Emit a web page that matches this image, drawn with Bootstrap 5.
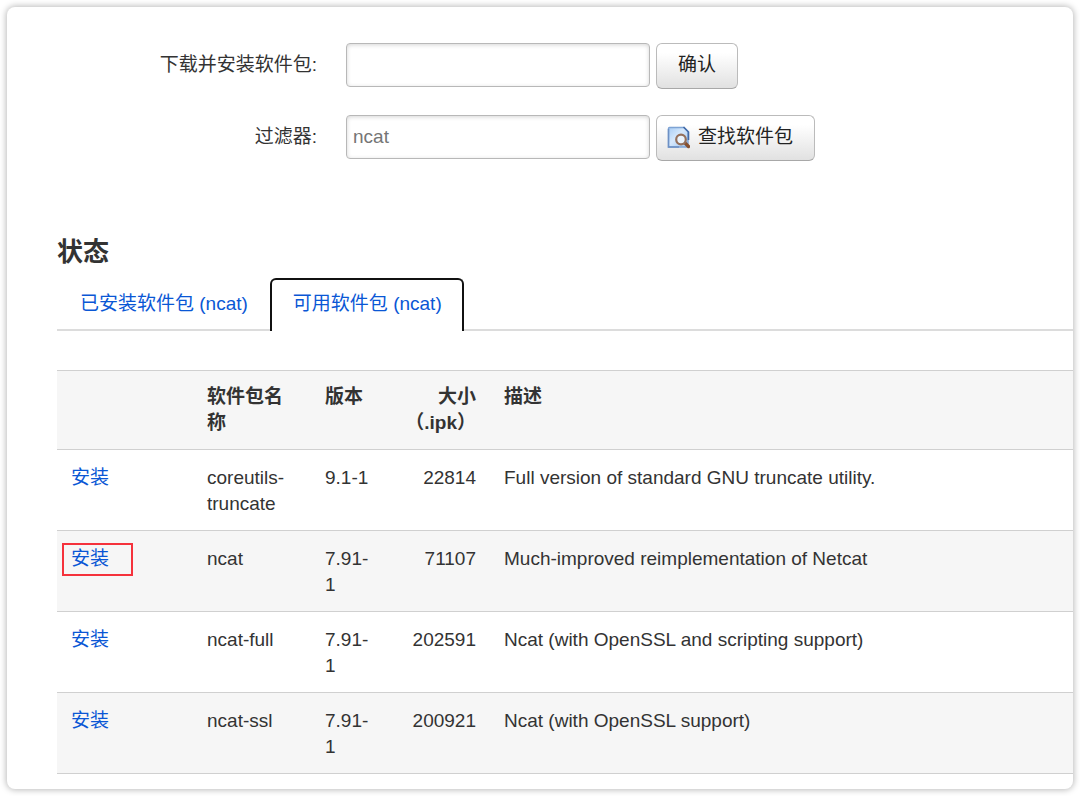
<!DOCTYPE html>
<html lang="zh-CN">
<head>
<meta charset="utf-8">
<meta name="viewport" content="width=device-width, initial-scale=1">
<title>软件包</title>
<link href="https://cdn.jsdelivr.net/npm/bootstrap@5.3.0/dist/css/bootstrap.min.css" rel="stylesheet">
<style>
  body { font-family: "Liberation Sans", "Noto Sans CJK SC", sans-serif; font-size: 19px; line-height: 26px; color: #333; background: #fff; padding: 7px; }
  .panel { border-radius: 8px; box-shadow: 0 0 6px 1px rgba(0,0,0,.27); padding: 36px 0 15px 50px; overflow: hidden; }
  a { color: #0a57d5; text-decoration: none; }
  .field-row { display: flex; align-items: flex-start; gap: 6px; min-height: 46px; margin-bottom: 26px; }
  .field-row label { width: 260px; margin-right: 23px; padding-top: 9px; text-align: right; flex: none; }
  .form-control { flex: 0 1 304px; min-width: 0; height: 44px; padding: 6px; font-size: 19px; line-height: 26px; color: #757575; border: 1px solid #b8b8b8; border-radius: 4px; box-shadow: inset 0 1px 4px rgba(0,0,0,.17); }
  .btn-soft { height: 46px; padding: 0 21px 2px; font-size: 19px; line-height: 26px; color: #222; border: 1px solid #bbb; border-bottom-color: #a8a8a8; border-radius: 6px; background: linear-gradient(#fff 20%, #e1e1e1); flex: none; }
  .btn-find { padding-left: 10px; gap: 8px; }
  h2 { font-size: 26px; line-height: 36px; font-weight: 700; margin: 73px 0 8px; }
  .nav-tabs { --bs-nav-tabs-border-width: 2px; border-bottom: 2px solid #dcdcdc; margin-bottom: 39px; }
  .nav-tabs .nav-link { font-size: 19px; line-height: 26px; padding: 11px 20px 12px 21px; color: #0a57d5; border: 2px solid transparent; border-bottom: 0; margin-bottom: -2px; border-radius: 6px 6px 0 0; }
  .nav-tabs .nav-link.active { color: #0a57d5; border-color: #111; padding-bottom: 14px; }
  .packages { table-layout: fixed; width: 100%; min-width: 800px; border-top: 1px solid #d0d0d0; }
  .packages th, .packages td { padding: 15px 14px 13px; vertical-align: top; border-bottom: 1px solid #d0d0d0; }
  .packages th { padding-top: 13px; background: #f6f6f6; }
  .packages tbody tr:nth-child(even) { background: #f6f6f6; }
  .col-act { width: 136px; } .col-name { width: 118px; } .col-ver { width: 79px; } .col-size { width: 100px; }
  .focus-box { left: 5px; top: 12px; width: 71px; height: 33px; border: 2px solid #f5323c; pointer-events: none; }
</style>
</head>
<body>
<main class="panel">
  <form>
    <div class="field-row">
      <label for="pkg-url">下载并安装软件包:</label>
      <input class="form-control" id="pkg-url" type="text">
      <button class="btn btn-soft" type="button">确认</button>
    </div>
    <div class="field-row mb-0">
      <label for="pkg-filter">过滤器:</label>
      <input class="form-control" id="pkg-filter" type="text" value="ncat">
      <button class="btn btn-soft btn-find d-flex align-items-center" type="button">
        <svg width="23" height="23" viewBox="0 0 23 23" aria-hidden="true">
          <defs><linearGradient id="sheet" x1="0" y1="0" x2="1" y2="1"><stop offset="0" stop-color="#a9cdf5"/><stop offset=".45" stop-color="#d6e8fc"/><stop offset="1" stop-color="#9cc5f2"/></linearGradient></defs>
          <path d="M2.500 1.500H17l4 4v15.500H1.500v-18.500a1 1 0 0 1 1-1z" fill="url(#sheet)" stroke="#7ea3d4" stroke-width="1.400"/>
          <path d="M16.500 1l5 5v8" fill="none" stroke="#426aa8" stroke-width="1.600"/>
          <path d="M1.500 3v18H12" fill="none" stroke="#6d90c4" stroke-width="1.500"/>
          <path d="M18 17l3.500 3.500" stroke="#86502f" stroke-width="3.400" stroke-linecap="round"/>
          <circle cx="14" cy="13.500" r="4.800" fill="#e9f3fd" stroke="#94705c" stroke-width="2.200"/>
        </svg>
        <span>查找软件包</span>
      </button>
    </div>
  </form>

  <h2>状态</h2>
  <ul class="nav nav-tabs">
    <li class="nav-item"><a class="nav-link" href="#installed">已安装软件包 (ncat)</a></li>
    <li class="nav-item"><a class="nav-link active" aria-current="page" href="#available">可用软件包 (ncat)</a></li>
  </ul>

  <table class="packages" id="available">
    <colgroup><col class="col-act"><col class="col-name"><col class="col-ver"><col class="col-size"><col></colgroup>
    <thead>
      <tr><th></th><th>软件包名称</th><th>版本</th><th class="text-end">大小（.ipk）</th><th>描述</th></tr>
    </thead>
    <tbody>
      <tr><td><a href="#coreutils">安装</a></td><td>coreutils-truncate</td><td>9.1-1</td><td class="text-end">22814</td><td>Full version of standard GNU truncate utility.</td></tr>
      <tr><td class="position-relative"><a href="#ncat">安装</a><span class="focus-box position-absolute"></span></td><td>ncat</td><td>7.91-1</td><td class="text-end">71107</td><td>Much-improved reimplementation of Netcat</td></tr>
      <tr><td><a href="#ncat-full">安装</a></td><td>ncat-full</td><td>7.91-1</td><td class="text-end">202591</td><td>Ncat (with OpenSSL and scripting support)</td></tr>
      <tr><td><a href="#ncat-ssl">安装</a></td><td>ncat-ssl</td><td>7.91-1</td><td class="text-end">200921</td><td>Ncat (with OpenSSL support)</td></tr>
    </tbody>
  </table>
</main>
<script src="https://cdn.jsdelivr.net/npm/bootstrap@5.3.0/dist/js/bootstrap.bundle.min.js"></script>
</body>
</html>
